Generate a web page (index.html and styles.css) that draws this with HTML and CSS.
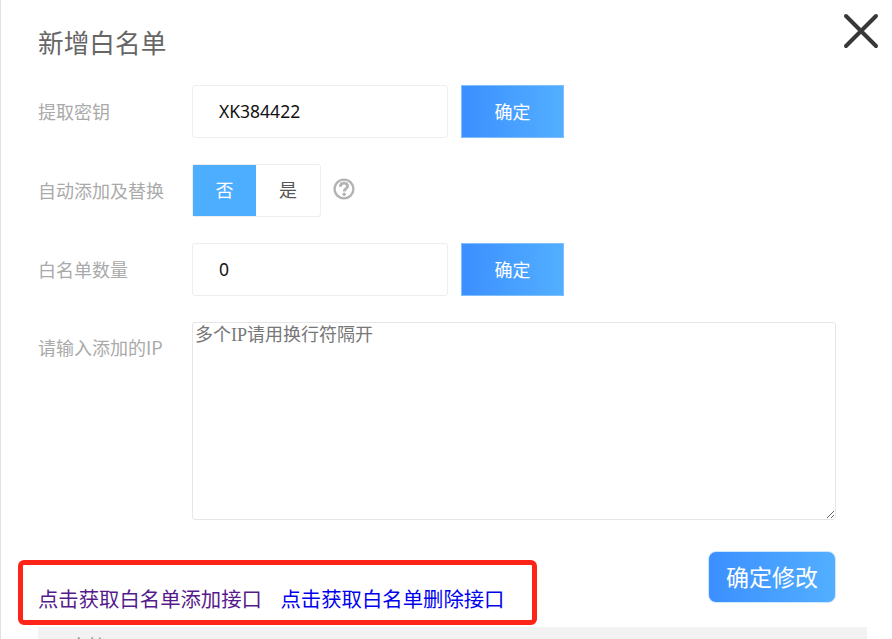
FILE: index.html
```html
<!DOCTYPE html>
<html lang="zh-CN">
<head>
<meta charset="utf-8">
<title>新增白名单</title>
<link rel="stylesheet" href="styles.css">
</head>
<body>
<div class="dialog">
  <h1 class="title">新增白名单</h1>
  <svg class="close" viewBox="0 0 36 36" width="36" height="36"><path d="M3 3L33 33M33 3L3 33" fill="none" stroke="#383838" stroke-width="4" stroke-linecap="round"/></svg>
  <div class="row">
    <label class="label">提取密钥</label>
    <div class="field">XK384422</div>
    <button class="btn">确定</button>
  </div>
  <div class="row">
    <label class="label">自动添加及替换</label>
    <div class="toggle">
      <span class="opt on">否</span>
      <span class="opt">是</span>
    </div>
    <svg class="help" viewBox="0 0 22 22" width="22" height="22"><circle cx="11" cy="11" r="9.4" fill="none" stroke="#b3b3b3" stroke-width="2.4"/><path d="M7.4 8.8C7.4 6.5 9 5.2 11 5.2C13.1 5.2 14.6 6.5 14.6 8.3C14.6 10.6 11.2 10.8 11.2 13.4" fill="none" stroke="#b3b3b3" stroke-width="2.8"/><circle cx="11.2" cy="16.3" r="1.7" fill="#b3b3b3"/></svg>
  </div>
  <div class="row">
    <label class="label">白名单数量</label>
    <div class="field">0</div>
    <button class="btn">确定</button>
  </div>
  <div class="row row-top">
    <label class="label">请输入添加的IP</label>
    <textarea class="ips" placeholder="多个IP请用换行符隔开"></textarea>
  </div>
  <div class="foot">
    <div class="links">
      <a class="link visited" href="#a">点击获取白名单添加接口</a>
      <a class="link" href="#b">点击获取白名单删除接口</a>
    </div>
    <button class="submit">确定修改</button>
  </div>
  <div class="strip"><span class="strip-text">文档</span></div>
</div>
</body>
</html>
```

FILE: styles.css
```css
html, body {
  margin: 0;
  height: 100%;
  overflow: hidden;
  background: #fff;
}
.dialog {
  position: relative;
  box-sizing: border-box;
  height: 639px;
  padding: 26px 25px 0 37px;
  border-left: 1px solid #e2e2e2;
  font-family: "Noto Sans CJK SC", "Liberation Sans", sans-serif;
  overflow: hidden;
}
.title {
  margin: 0 0 28px;
  height: 31px;
  font-size: 25.7px;
  line-height: 31px;
  font-weight: 400;
  color: #666;
}
.close {
  position: absolute;
  left: 842px;
  top: 13px;
}
.row {
  display: flex;
  align-items: center;
  height: 53px;
  margin-bottom: 26px;
}
.row-top {
  align-items: flex-start;
  height: 198px;
  margin-bottom: 0;
}
.label {
  width: 154px;
  flex: none;
  padding-bottom: 2px;
  font-size: 18px;
  color: #aaa;
}
.row-top .label {
  margin-top: 12px;
  padding-bottom: 0;
}
.field {
  box-sizing: border-box;
  width: 256px;
  height: 53px;
  padding-left: 26px;
  border: 1px solid #eee;
  border-radius: 3px;
  font-family: "Noto Sans", "Liberation Sans", sans-serif;
  font-size: 17.5px;
  line-height: 50px;
  color: #111;
}
.btn {
  width: 103px;
  height: 53px;
  margin-left: 13px;
  padding: 0 0 2px;
  border: 1px solid #80bfff;
  background: linear-gradient(90deg, #3c8fff, #52afff);
  color: #fff;
  font-family: inherit;
  font-size: 18px;
}
.toggle {
  box-sizing: border-box;
  display: flex;
  width: 129px;
  height: 53px;
  border: 1px solid #eee;
  border-radius: 3px;
}
.opt {
  flex: 1;
  font-size: 18px;
  line-height: 49px;
  text-align: center;
  color: #555;
}
.opt.on {
  flex: none;
  width: 63px;
  background: #4dadff;
  color: #fff;
}
.help {
  margin: -3px 0 0 12px;
}
.ips {
  box-sizing: border-box;
  width: 644px;
  height: 198px;
  padding: 0 2px;
  border: 1px solid #e6e6e6;
  border-radius: 3px;
  font-family: "Liberation Serif", "Noto Sans CJK SC", serif;
  font-size: 18px;
  line-height: 24px;
  outline: none;
}
.ips::placeholder {
  color: #777;
}
.foot {
  display: flex;
  justify-content: space-between;
  align-items: flex-start;
  box-sizing: border-box;
  width: 798px;
  height: 107px;
  padding-top: 31px;
}
.links {
  margin-top: 33px;
  font-size: 20.36px;
  line-height: 28px;
  white-space: nowrap;
}
.links::before {
  content: "";
  position: absolute;
  left: 17px;
  top: 560px;
  width: 509px;
  height: 55px;
  border: 5px solid #ff2418;
  border-radius: 6px;
}
.link {
  position: relative;
  color: #00e;
  text-decoration: none;
  margin-right: 14px;
}
.link.visited {
  color: #551a8b;
}
.submit {
  width: 128px;
  height: 52px;
  border: 1px solid #cfe6ff;
  border-radius: 8px;
  background: linear-gradient(90deg, #3c8fff, #52afff);
  color: #fff;
  font-family: inherit;
  font-size: 23px;
  padding: 0 0 2px;
}
.strip {
  width: 829px;
  height: 40px;
  padding-top: 5px;
  background: #f2f2f2;
  font-size: 18px;
  line-height: 26px;
  color: #888;
}
.strip-text {
  padding-left: 32px;
}
```
